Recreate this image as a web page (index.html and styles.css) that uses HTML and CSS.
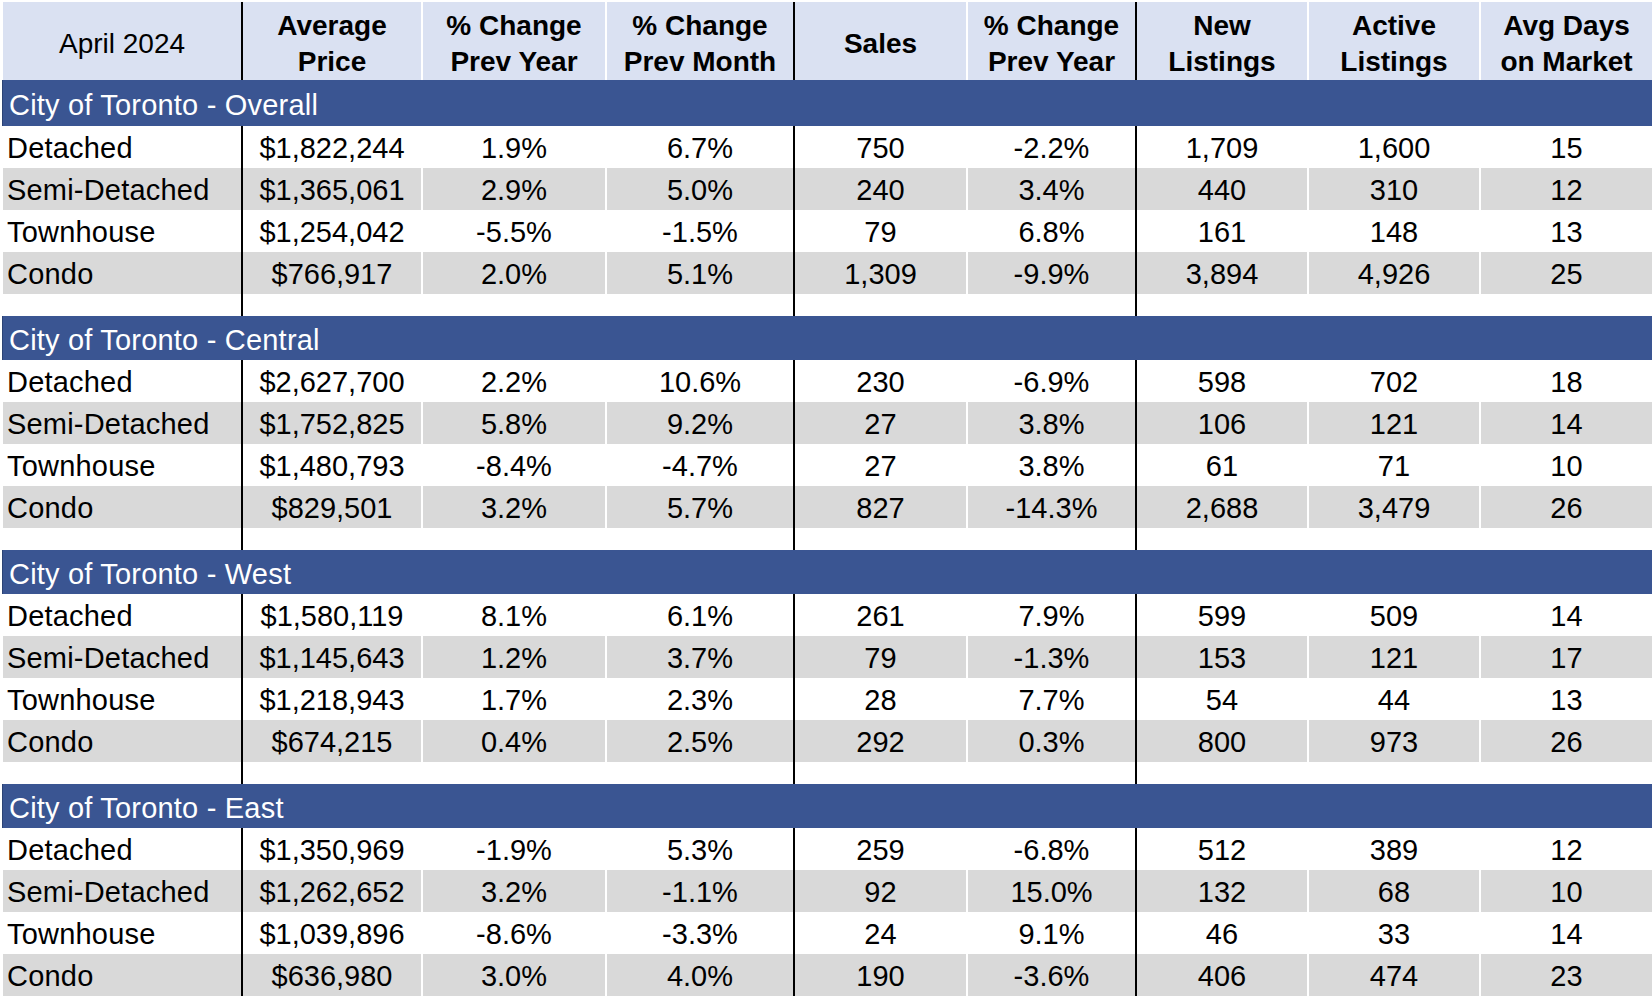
FILE: index.html
```html
<!DOCTYPE html>
<html lang="en">
<head>
<meta charset="utf-8">
<title>City of Toronto – April 2024 Market Summary</title>
<link rel="stylesheet" href="styles.css">
</head>
<body>
<div class="sheet">
  <div class="row hdr">
    <div class="c first"><span>April 2024</span></div>
    <div class="c b"><span>Average<br>Price</span></div>
    <div class="c b"><span>% Change<br>Prev Year</span></div>
    <div class="c b"><span>% Change<br>Prev Month</span></div>
    <div class="c b"><span>Sales</span></div>
    <div class="c b"><span>% Change<br>Prev Year</span></div>
    <div class="c b"><span>New<br>Listings</span></div>
    <div class="c b"><span>Active<br>Listings</span></div>
    <div class="c b"><span>Avg Days<br>on Market</span></div>
  </div>

  <div class="band top">City of Toronto - Overall</div>
  <div class="row data"><div class="c first">Detached</div><div class="c">$1,822,244</div><div class="c">1.9%</div><div class="c">6.7%</div><div class="c">750</div><div class="c">-2.2%</div><div class="c">1,709</div><div class="c">1,600</div><div class="c">15</div></div>
  <div class="row data alt"><div class="c first">Semi-Detached</div><div class="c">$1,365,061</div><div class="c">2.9%</div><div class="c">5.0%</div><div class="c">240</div><div class="c">3.4%</div><div class="c">440</div><div class="c">310</div><div class="c">12</div></div>
  <div class="row data"><div class="c first">Townhouse</div><div class="c">$1,254,042</div><div class="c">-5.5%</div><div class="c">-1.5%</div><div class="c">79</div><div class="c">6.8%</div><div class="c">161</div><div class="c">148</div><div class="c">13</div></div>
  <div class="row data alt"><div class="c first">Condo</div><div class="c">$766,917</div><div class="c">2.0%</div><div class="c">5.1%</div><div class="c">1,309</div><div class="c">-9.9%</div><div class="c">3,894</div><div class="c">4,926</div><div class="c">25</div></div>
  <div class="row gap"><div class="c first"></div><div class="c"></div><div class="c"></div><div class="c"></div><div class="c"></div><div class="c"></div><div class="c"></div><div class="c"></div><div class="c"></div></div>

  <div class="band">City of Toronto - Central</div>
  <div class="row data"><div class="c first">Detached</div><div class="c">$2,627,700</div><div class="c">2.2%</div><div class="c">10.6%</div><div class="c">230</div><div class="c">-6.9%</div><div class="c">598</div><div class="c">702</div><div class="c">18</div></div>
  <div class="row data alt"><div class="c first">Semi-Detached</div><div class="c">$1,752,825</div><div class="c">5.8%</div><div class="c">9.2%</div><div class="c">27</div><div class="c">3.8%</div><div class="c">106</div><div class="c">121</div><div class="c">14</div></div>
  <div class="row data"><div class="c first">Townhouse</div><div class="c">$1,480,793</div><div class="c">-8.4%</div><div class="c">-4.7%</div><div class="c">27</div><div class="c">3.8%</div><div class="c">61</div><div class="c">71</div><div class="c">10</div></div>
  <div class="row data alt"><div class="c first">Condo</div><div class="c">$829,501</div><div class="c">3.2%</div><div class="c">5.7%</div><div class="c">827</div><div class="c">-14.3%</div><div class="c">2,688</div><div class="c">3,479</div><div class="c">26</div></div>
  <div class="row gap"><div class="c first"></div><div class="c"></div><div class="c"></div><div class="c"></div><div class="c"></div><div class="c"></div><div class="c"></div><div class="c"></div><div class="c"></div></div>

  <div class="band">City of Toronto - West</div>
  <div class="row data"><div class="c first">Detached</div><div class="c">$1,580,119</div><div class="c">8.1%</div><div class="c">6.1%</div><div class="c">261</div><div class="c">7.9%</div><div class="c">599</div><div class="c">509</div><div class="c">14</div></div>
  <div class="row data alt"><div class="c first">Semi-Detached</div><div class="c">$1,145,643</div><div class="c">1.2%</div><div class="c">3.7%</div><div class="c">79</div><div class="c">-1.3%</div><div class="c">153</div><div class="c">121</div><div class="c">17</div></div>
  <div class="row data"><div class="c first">Townhouse</div><div class="c">$1,218,943</div><div class="c">1.7%</div><div class="c">2.3%</div><div class="c">28</div><div class="c">7.7%</div><div class="c">54</div><div class="c">44</div><div class="c">13</div></div>
  <div class="row data alt"><div class="c first">Condo</div><div class="c">$674,215</div><div class="c">0.4%</div><div class="c">2.5%</div><div class="c">292</div><div class="c">0.3%</div><div class="c">800</div><div class="c">973</div><div class="c">26</div></div>
  <div class="row gap"><div class="c first"></div><div class="c"></div><div class="c"></div><div class="c"></div><div class="c"></div><div class="c"></div><div class="c"></div><div class="c"></div><div class="c"></div></div>

  <div class="band">City of Toronto - East</div>
  <div class="row data"><div class="c first">Detached</div><div class="c">$1,350,969</div><div class="c">-1.9%</div><div class="c">5.3%</div><div class="c">259</div><div class="c">-6.8%</div><div class="c">512</div><div class="c">389</div><div class="c">12</div></div>
  <div class="row data alt"><div class="c first">Semi-Detached</div><div class="c">$1,262,652</div><div class="c">3.2%</div><div class="c">-1.1%</div><div class="c">92</div><div class="c">15.0%</div><div class="c">132</div><div class="c">68</div><div class="c">10</div></div>
  <div class="row data"><div class="c first">Townhouse</div><div class="c">$1,039,896</div><div class="c">-8.6%</div><div class="c">-3.3%</div><div class="c">24</div><div class="c">9.1%</div><div class="c">46</div><div class="c">33</div><div class="c">14</div></div>
  <div class="row data alt"><div class="c first">Condo</div><div class="c">$636,980</div><div class="c">3.0%</div><div class="c">4.0%</div><div class="c">190</div><div class="c">-3.6%</div><div class="c">406</div><div class="c">474</div><div class="c">23</div></div>
</div>
</body>
</html>
```

FILE: styles.css
```css
* { box-sizing: border-box; }

html, body {
  margin: 0;
  padding: 0;
  background: #ffffff;
}

body {
  width: 1652px;
  height: 998px;
  overflow: hidden;
  font-family: "Liberation Sans", Arial, sans-serif;
  color: #000;
}

.sheet {
  padding: 2px 0 0 2px;
}

.row {
  display: grid;
  grid-template-columns: 239px 180px 184px 188px 173px 169px 172px 172px 173px;
}

.c {
  border-left: 2px solid #ffffff;
  text-align: center;
  white-space: nowrap;
}

.c.first {
  border-left-width: 1px;
  text-align: left;
}

.row > .c:nth-child(2),
.row > .c:nth-child(5),
.row > .c:nth-child(7) {
  border-left-color: #000000;
}

/* header */
.hdr {
  height: 78px;
}

.hdr .c {
  background: #dae1f2;
  display: flex;
  align-items: center;
  justify-content: center;
  padding-top: 6px;
  font-size: 28px;
  line-height: 36px;
}

.hdr .c.b {
  font-weight: bold;
}

.hdr .c.first {
  text-align: center;
}

/* section band */
.band {
  height: 44px;
  background: #3a5592;
  border-left: 1px solid #2c4375;
  color: #ffffff;
  font-size: 29px;
  letter-spacing: 0.2px;
  line-height: 41px;
  padding: 4px 0 0 6px;
  white-space: nowrap;
}

.band.top {
  height: 46px;
  padding-top: 5px;
}

/* data rows */
.data {
  height: 42px;
}

.data .c {
  font-size: 29px;
  line-height: 40px;
  padding-top: 2px;
  background: #ffffff;
}

.data .c.first {
  padding-left: 4px;
  letter-spacing: 0.2px;
}

.data.alt .c {
  background: #d9d9d9;
}

.gap {
  height: 22px;
}

.gap .c {
  background: #ffffff;
}
```
